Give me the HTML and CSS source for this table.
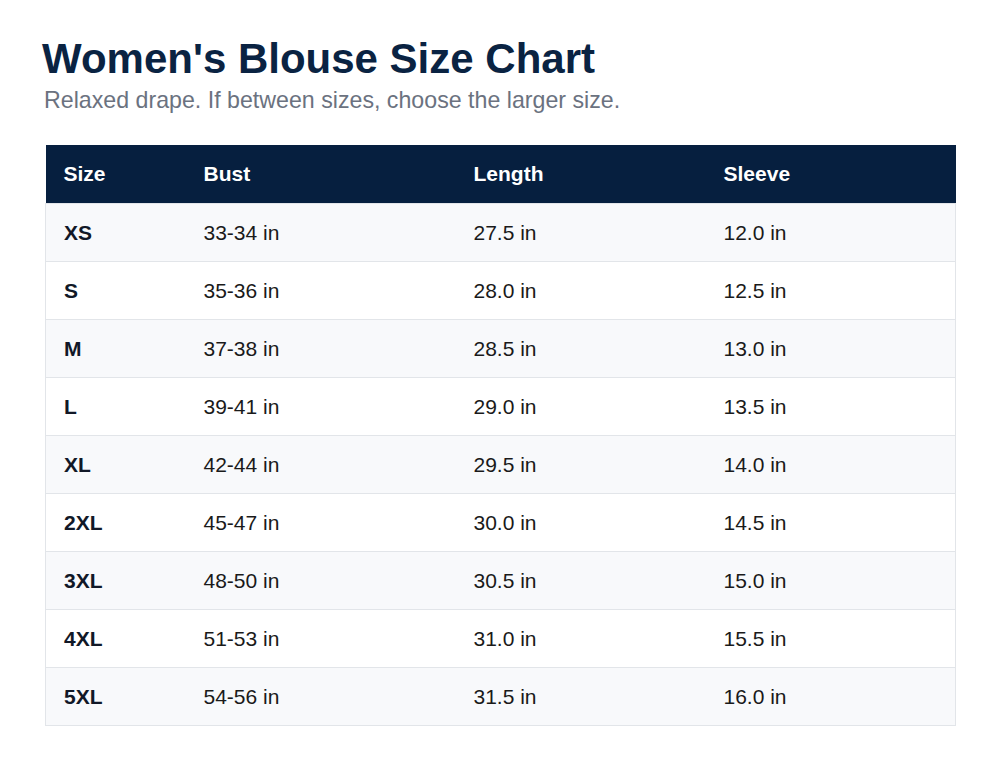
FILE: index.html
```html
<!DOCTYPE html>
<html>
<head>
<meta charset="utf-8">
<link rel="stylesheet" href="styles.css">
</head>
<body>
<div class="page">
  <h1 class="title">Women's Blouse Size Chart</h1>
  <p class="subtitle">Relaxed drape. If between sizes, choose the larger size.</p>
  <table class="chart">
    <colgroup>
      <col class="c1"><col class="c2"><col class="c3"><col class="c4">
    </colgroup>
    <thead>
      <tr><th>Size</th><th>Bust</th><th>Length</th><th>Sleeve</th></tr>
    </thead>
    <tbody>
      <tr><td class="size">XS</td><td>33-34 in</td><td>27.5 in</td><td>12.0 in</td></tr>
      <tr><td class="size">S</td><td>35-36 in</td><td>28.0 in</td><td>12.5 in</td></tr>
      <tr><td class="size">M</td><td>37-38 in</td><td>28.5 in</td><td>13.0 in</td></tr>
      <tr><td class="size">L</td><td>39-41 in</td><td>29.0 in</td><td>13.5 in</td></tr>
      <tr><td class="size">XL</td><td>42-44 in</td><td>29.5 in</td><td>14.0 in</td></tr>
      <tr><td class="size">2XL</td><td>45-47 in</td><td>30.0 in</td><td>14.5 in</td></tr>
      <tr><td class="size">3XL</td><td>48-50 in</td><td>30.5 in</td><td>15.0 in</td></tr>
      <tr><td class="size">4XL</td><td>51-53 in</td><td>31.0 in</td><td>15.5 in</td></tr>
      <tr><td class="size">5XL</td><td>54-56 in</td><td>31.5 in</td><td>16.0 in</td></tr>
    </tbody>
  </table>
</div>
</body>
</html>
```
FILE: styles.css
```css
html, body {
  margin: 0;
  padding: 0;
  background: #ffffff;
  font-family: "Liberation Sans", Arial, sans-serif;
}
.page {
  padding: 36px 44px 0 44px;
}
.title {
  margin: 0 0 0 -2px;
  font-size: 42px;
  line-height: 46px;
  font-weight: 700;
  color: #0a2342;
}
.subtitle {
  margin: 5px 0 0 0;
  font-size: 23.2px;
  line-height: 27px;
  color: #6b7280;
}
.chart {
  margin: 31px 0 0 1px;
  width: 910px;
  border-collapse: collapse;
  table-layout: fixed;
}
.c1 { width: 140px; }
.c2 { width: 270px; }
.c3 { width: 250px; }
.c4 { width: 250px; }
.chart th {
  background: #061f3f;
  color: #ffffff;
  font-size: 21px;
  font-weight: 700;
  text-align: left;
  height: 58px;
  padding: 0 18px;
}
.chart td {
  height: 57px;
  padding: 0 18px;
  font-size: 21px;
  color: #1a1a1a;
  border: 1px solid #e2e5e9;
  border-left: none;
  border-right: none;
}
.chart td:first-child { border-left: 1px solid #e2e5e9; }
.chart td:last-child { border-right: 1px solid #e2e5e9; }
.chart tbody tr:nth-child(odd) td { background: #f8f9fb; }
.chart tbody tr:nth-child(even) td { background: #ffffff; }
.chart td.size {
  font-weight: 700;
  color: #111827;
}
```
